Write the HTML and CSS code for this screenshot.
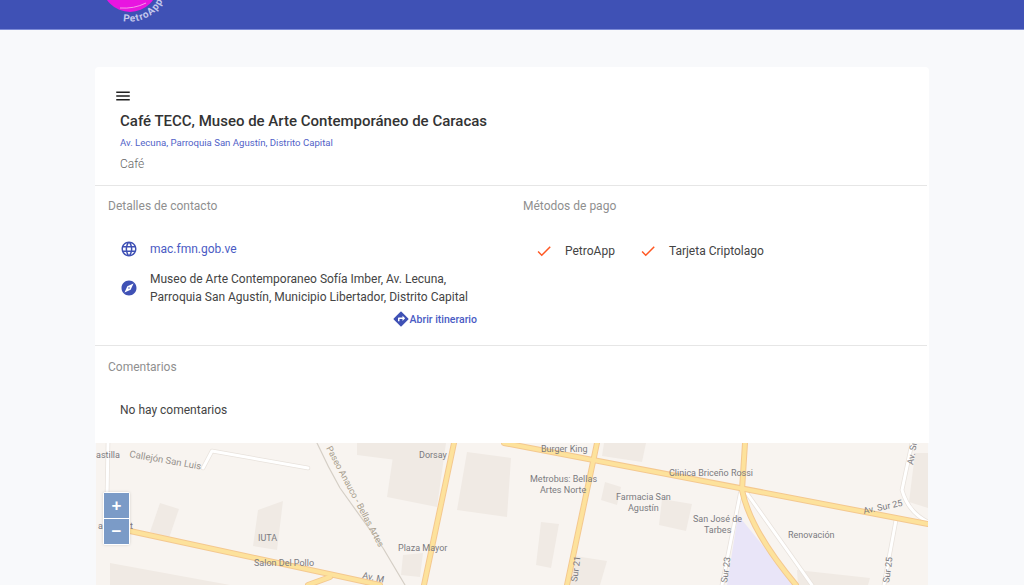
FILE: index.html
```html
<!DOCTYPE html>
<html lang="es">
<head>
    <meta charset="UTF-8">
    <meta name="viewport" content="width=device-width, initial-scale=1.0">
    <title>Café TECC</title>
    <link rel="stylesheet" href="styles.css">
</head>
<body>
    <header class="topbar">
        <div class="logo">
            <svg width="80" height="29" viewBox="95 0 80 29">
                <circle cx="130" cy="-16" r="28" fill="#e815e0"/>
                <path d="M120 8 Q134 9 146 3" fill="none" stroke="#f59ae8" stroke-width="1"/>
                <path id="logo-arc" d="M123 21 A36 36 0 0 0 166 -16" fill="none"/>
                <text class="logo-text"><textPath href="#logo-arc">PetroApp</textPath></text>
            </svg>
        </div>
    </header>

    <main class="page">
        <section class="card">
            <div class="place">
                <svg class="menu-icon" width="18" height="18" viewBox="0 0 24 24"><path d="M3 18h18v-2H3v2zm0-5h18v-2H3v2zm0-7v2h18V6H3z" fill="#212121"/></svg>
                <h1>Café TECC, Museo de Arte Contemporáneo de Caracas</h1>
                <a class="place-address" href="#">Av. Lecuna, Parroquia San Agustín, Distrito Capital</a>
                <p class="place-type">Café</p>
            </div>

            <div class="details">
                <div class="contact">
                    <h2>Detalles de contacto</h2>
                    <div class="contact-row web-row">
                        <svg width="18" height="18" viewBox="0 0 24 24"><path d="M11.99 2C6.47 2 2 6.48 2 12s4.47 10 9.99 10C17.52 22 22 17.52 22 12S17.52 2 11.99 2zm6.93 6h-2.95c-.32-1.25-.78-2.45-1.38-3.56 1.84.63 3.37 1.91 4.33 3.56zM12 4.04c.83 1.2 1.48 2.53 1.91 3.96h-3.82c.43-1.43 1.08-2.76 1.91-3.96zM4.26 14C4.1 13.36 4 12.69 4 12s.1-1.36.26-2h3.38c-.08.66-.14 1.32-.14 2 0 .68.06 1.34.14 2H4.26zm.82 2h2.95c.32 1.25.78 2.45 1.38 3.56-1.84-.63-3.37-1.9-4.33-3.56zm2.95-8H5.08c.96-1.66 2.49-2.93 4.33-3.56C8.81 5.55 8.35 6.75 8.03 8zM12 19.96c-.83-1.2-1.48-2.53-1.91-3.96h3.82c-.43 1.43-1.08 2.76-1.91 3.96zM14.34 14H9.66c-.09-.66-.16-1.32-.16-2 0-.68.07-1.35.16-2h4.68c.09.65.16 1.32.16 2 0 .68-.07 1.34-.16 2zm.25 5.56c.6-1.11 1.06-2.31 1.38-3.56h2.95c-.96 1.65-2.49 2.93-4.33 3.56zM16.36 14c.08-.66.14-1.32.14-2 0-.68-.06-1.34-.14-2h3.38c.16.64.26 1.31.26 2s-.1 1.36-.26 2h-3.38z" fill="#3f51b5"/></svg>
                        <a href="#">mac.fmn.gob.ve</a>
                    </div>
                    <div class="contact-row">
                        <svg width="18" height="18" viewBox="0 0 24 24"><path d="M12 10.9c-.61 0-1.1.49-1.1 1.1s.49 1.1 1.1 1.1c.61 0 1.1-.49 1.1-1.1s-.49-1.1-1.1-1.1zM12 2C6.48 2 2 6.48 2 12s4.48 10 10 10 10-4.48 10-10S17.52 2 12 2zm2.19 12.19L6 18l3.81-8.19L18 6l-3.81 8.19z" fill="#3f51b5"/></svg>
                        <p>Museo de Arte Contemporaneo Sofía Imber, Av. Lecuna,<br>Parroquia San Agustín, Municipio Libertador, Distrito Capital</p>
                    </div>
                    <a class="route" href="#">
                        <svg width="18" height="18" viewBox="0 0 24 24"><path d="M21.71 11.29l-9-9a.996.996 0 0 0-1.41 0l-9 9a.996.996 0 0 0 0 1.41l9 9c.39.39 1.02.39 1.41 0l9-9a.996.996 0 0 0 0-1.41zM14 14.5V12h-4v3H8v-4c0-.55.45-1 1-1h5V7.5l3.5 3.5-3.5 3.5z" fill="#3f51b5"/></svg>
                        Abrir itinerario
                    </a>
                </div>
                <div class="payment">
                    <h2>Métodos de pago</h2>
                    <ul class="methods">
                        <li><svg width="18" height="18" viewBox="0 0 24 24"><path d="M9 16.2 4.8 12l-1.4 1.4L9 19 21 7l-1.4-1.4L9 16.2z" fill="#ff5722"/></svg>PetroApp</li>
                        <li><svg width="18" height="18" viewBox="0 0 24 24"><path d="M9 16.2 4.8 12l-1.4 1.4L9 19 21 7l-1.4-1.4L9 16.2z" fill="#ff5722"/></svg>Tarjeta Criptolago</li>
                    </ul>
                </div>
            </div>

            <div class="comments">
                <h2>Comentarios</h2>
                <p>No hay comentarios</p>
            </div>
        </section>

        <div class="map">
            <svg class="map-canvas" width="832" height="142" viewBox="96 443 832 142">
                <rect x="96" y="443" width="832" height="142" fill="#f8f4f0"/>
                <g fill="#f0eae4">
                    <polygon points="357,443 418,443 412,462 357,455"/>
                    <polygon points="395,443 446,443 437,507 387,497"/>
                    <polygon points="467,452 511,458 507,517 457,510"/>
                    <polygon points="160,503 179,509 169,538 150,532"/>
                    <polygon points="258,510 283,501 277,550 253,546"/>
                    <polygon points="403,555 423,553 420,577 401,575"/>
                    <polygon points="110,563 230,585 110,585"/>
                    <polygon points="604,443 646,443 642,462 602,456"/>
                    <polygon points="605,482 621,487 617,505 601,500"/>
                    <polygon points="662,499 692,504 686,531 659,525"/>
                    <polygon points="541,522 559,524 551,568 536,565"/>
                    <polygon points="575,556 607,561 600,585 568,585"/>
                    <polygon points="797,570 870,578 868,585 798,585"/>
                    <polygon points="915,453 928,453 928,508 909,502"/>
                </g>
                <polygon points="738,515 795,585 727,585" fill="#e9e5f8"/>

                <g fill="none" stroke-linecap="round" stroke-linejoin="round">
                    <g stroke="#e8e2dc" stroke-width="4.5">
                        <path d="M108 443 L107 497"/>
                        <path d="M203 468 L212 451 L308 468"/>
                        <path d="M741 490 L722 585"/>
                        <path d="M746 492 L812 585"/>
                        <path d="M896 520 L884 585"/>
                        <path d="M912 443 L902 490 Q908 512 928 522"/>
                    </g>
                    <g stroke="#fff" stroke-width="3">
                        <path d="M108 443 L107 497"/>
                        <path d="M203 468 L212 451 L308 468"/>
                        <path d="M741 490 L722 585"/>
                        <path d="M746 492 L812 585"/>
                        <path d="M896 520 L884 585"/>
                        <path d="M912 443 L902 490 Q908 512 928 522"/>
                    </g>
                    <path d="M317 443 Q328 467 340 488 L383 548 L405 585" stroke="#d5cfc6" stroke-width="1.2"/>
                    <g stroke="#f4c88f" stroke-width="6">
                        <path d="M130 531 L380 585"/>
                        <path d="M504 443 L928 524"/>
                        <path d="M454 443 L424 585"/>
                        <path d="M597 443 L567 585"/>
                        <path d="M745 443 L742 490 Q750 530 796 585"/>
                        <path d="M308 585 L330 577"/>
                    </g>
                    <g stroke="#fde29c" stroke-width="4">
                        <path d="M130 531 L380 585"/>
                        <path d="M504 443 L928 524"/>
                        <path d="M454 443 L424 585"/>
                        <path d="M597 443 L567 585"/>
                        <path d="M745 443 L742 490 Q750 530 796 585"/>
                        <path d="M308 585 L330 577"/>
                    </g>
                </g>

                <g class="map-label">
                    <text x="96" y="458">astilla</text>
                    <text class="street-label" transform="translate(129 457) rotate(10)">Callejón San Luis</text>
                    <text x="419" y="458">Dorsay</text>
                    <text x="258" y="541">IUTA</text>
                    <text x="254" y="566">Salon Del Pollo</text>
                    <text x="398" y="551">Plaza Mayor</text>
                    <text x="98" y="529">a</text>
                    <text x="130" y="529">t</text>
                    <text transform="translate(362 578) rotate(12)">Av. M</text>
                    <text class="path-label" transform="translate(326 448) rotate(62)">Paseo Anauco - Bellas Artes</text>
                    <text x="541" y="452">Burger King</text>
                    <text x="530" y="482">Metrobus: Bellas</text>
                    <text x="540" y="493">Artes Norte</text>
                    <text x="616" y="500">Farmacia San</text>
                    <text x="628" y="511">Agustín</text>
                    <text x="669" y="476">Clinica Briceño Rossi</text>
                    <text x="693" y="522">San José de</text>
                    <text x="704" y="533">Tarbes</text>
                    <text x="788" y="538">Renovación</text>
                    <text transform="translate(864 514) rotate(-12)">Av. Sur 25</text>
                    <text transform="translate(577 582) rotate(-82)">Sur 21</text>
                    <text transform="translate(727 583) rotate(-82)">Sur 23</text>
                    <text transform="translate(889 583) rotate(-82)">Sur 25</text>
                    <text transform="translate(913 465) rotate(-80)">Av. Sı</text>
                </g>
            </svg>

            <div class="zoom-control">
                <button>+</button>
                <button>−</button>
            </div>
        </div>
    </main>
</body>
</html>
```

FILE: styles.css
```css
html, body {
    height: 100%;
}
body {
    font-family: Roboto, "Liberation Sans", sans-serif;
    margin: 0;
    background-color: #f8f9fb;
    color: #444;
    overflow: hidden;
}
a {
    color: #4a5bc4;
    text-decoration: none;
}
h1, h2, p, ul {
    margin: 0;
    padding: 0;
}

.topbar {
    height: 29px;
    background-color: #3f51b5;
    border-bottom: 1px solid #7d8bd6;
    padding-left: 95px;
}
.logo {
    height: 29px;
}
.logo svg {
    display: block;
}
.logo-text {
    font-size: 10px;
    font-weight: 700;
    letter-spacing: 0.8px;
    fill: #c4c8ec;
}

.page {
    width: 834px;
    margin: 37px auto 0;
}
.card {
    background-color: #fff;
    border-radius: 4px 4px 0 0;
    height: 376px;
}

.place {
    height: 119px;
    padding: 20px 12px 0 25px;
    box-sizing: border-box;
    border-bottom: 1px solid #e6e6e6;
    margin-right: 2px;
}
.menu-icon {
    display: block;
    margin-left: -6px;
}
.place h1 {
    font-size: 15px;
    font-weight: 500;
    line-height: 18px;
    margin-top: 7px;
    color: #333;
}
.place-address {
    display: block;
    font-size: 9.6px;
    line-height: 14px;
    margin-top: 6px;
    color: #5263c8;
}
.place-type {
    font-size: 12px;
    font-weight: 300;
    line-height: 16px;
    margin-top: 6px;
    color: #666;
}

.details {
    display: flex;
    height: 160px;
    border-bottom: 1px solid #e6e6e6;
    margin-right: 2px;
    box-sizing: border-box;
}
.contact {
    width: 415px;
    padding: 12px 0 0 13px;
    box-sizing: border-box;
}
.payment {
    padding: 12px 0 0 13px;
}
h2 {
    font-size: 12px;
    font-weight: 400;
    line-height: 16px;
    color: #8f8f8f;
}

.contact-row {
    display: flex;
    align-items: center;
    gap: 12px;
    margin-left: 12px;
    font-size: 12px;
    line-height: 18px;
}
.web-row {
    margin-top: 26px;
    height: 18px;
}
.contact-row + .contact-row {
    margin-top: 12px;
}
.route {
    display: flex;
    align-items: center;
    justify-content: flex-end;
    width: 369px;
    margin-top: 4px;
    font-size: 10.5px;
    font-weight: 500;
}

.methods {
    display: flex;
    gap: 24px;
    list-style: none;
    margin-top: 28px;
    margin-left: 12px;
}
.methods li {
    display: flex;
    align-items: center;
    gap: 12px;
    font-size: 12px;
    line-height: 18px;
}

.comments {
    padding: 13px 13px 0;
}
.comments p {
    margin-top: 27px;
    margin-left: 12px;
    font-size: 12px;
    line-height: 16px;
}

.map {
    position: relative;
    height: 142px;
    margin-left: 1px;
    width: 832px;
}
.map-canvas {
    display: block;
}
.map-label {
    font-family: Roboto, "Liberation Sans", sans-serif;
    font-size: 9px;
    fill: #7b7b80;
}
.street-label {
    font-size: 9.6px;
    fill: #96918c;
}
.path-label {
    fill: #a89f8e;
}

.zoom-control {
    position: absolute;
    left: 7px;
    top: 49px;
    display: flex;
    flex-direction: column;
    gap: 1px;
    padding: 1px;
    background-color: #fff;
    border-radius: 2px;
    box-shadow: 0 0 3px rgba(0, 0, 0, 0.15);
}
.zoom-control button {
    width: 25px;
    height: 25px;
    padding: 0;
    border: none;
    background-color: #7b9bc7;
    color: #fff;
    font-family: "Liberation Sans", sans-serif;
    font-size: 17px;
    font-weight: 700;
    line-height: 25px;
}
```
